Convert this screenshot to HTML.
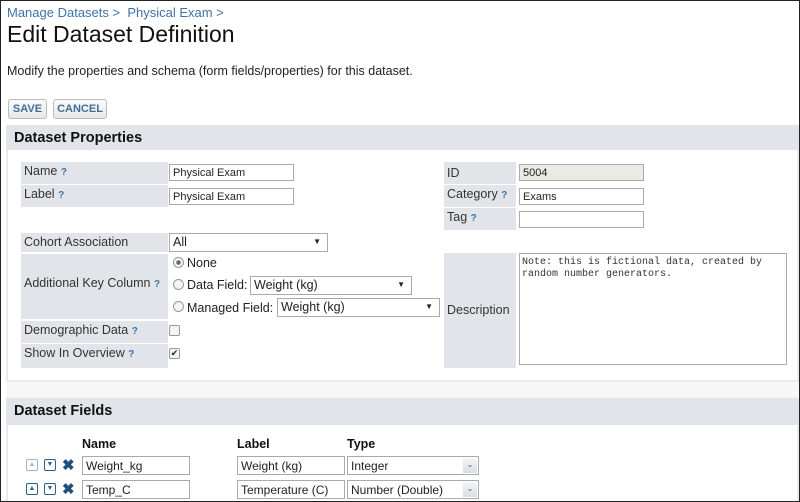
<!DOCTYPE html>
<html><head><style>
*{box-sizing:border-box;margin:0;padding:0}
html,body{width:800px;height:502px;overflow:hidden}
body{background:#fff;font-family:"Liberation Sans",sans-serif;position:relative;color:#222}
.frame{position:absolute;left:0;top:0;width:800px;height:502px;border:1px solid #222;z-index:10;pointer-events:none}
.a{position:absolute;white-space:nowrap}
.crumb{left:7px;top:5px;font-size:13px;color:#3f72a4}
h1{position:absolute;left:7px;top:21px;font-size:23px;font-weight:normal;color:#111}
.desc{left:7px;top:64px;font-size:12.5px;color:#222}
.btn{position:absolute;top:99px;height:20px;border:1px solid #bbb;border-radius:3px;background:linear-gradient(#fafafa,#e8e8e8);font-size:11px;font-weight:bold;color:#3f6f99;text-align:center;line-height:18px}
.ph{position:absolute;left:6px;right:1px;background:#e1e5e9;font-size:14.5px;font-weight:bold;padding-left:8px;color:#111}
.pb{position:absolute;left:6px;right:1px;background:#fff;border:2px solid #e8ebee;border-top:none}
.lab{position:absolute;background:#e1e5e9;font-size:12.5px;color:#333;padding:2px 3px}
.q{color:#3f72a4;font-size:10px;font-weight:bold}
.inp{position:absolute;height:17px;border:1px solid #aaa;background:#fff;font-size:11px;padding:2px 3px;color:#222}
.sel{position:absolute;height:19px;border:1px solid #aaa;background:#fff;font-size:12.5px;padding:1px 3px;color:#222}
.sel:after{content:"\25BC";position:absolute;right:6px;top:3px;font-size:8px}
.rad{position:absolute;width:11px;height:11px;border:1px solid #999;border-radius:50%;background:#f4f4f4}
.t{position:absolute;font-size:12.5px;color:#222}
.hd{position:absolute;top:437px;font-size:12.5px;font-weight:bold;color:#111}
.ic{position:absolute;width:12px;height:12px;border:1.5px solid #2e5f8a;border-radius:2px;font-size:7px;line-height:9px;text-align:center;color:#2e5f8a}
.x{position:absolute;font-size:15px;font-weight:bold;color:#1f4f7d;line-height:14px}
.dd{position:absolute;right:1px;top:1px;width:14px;bottom:1px;background:linear-gradient(#f4f6f8,#d8dde3);font-size:8px;text-align:center;color:#557;line-height:14px}
</style></head><body>
<div class="frame"></div>
<div class="a crumb">Manage Datasets &gt;&nbsp; Physical Exam &gt;</div>
<h1>Edit Dataset Definition</h1>
<div class="a desc">Modify the properties and schema (form fields/properties) for this dataset.</div>
<div class="btn" style="left:8px;width:39px">SAVE</div>
<div class="btn" style="left:53px;width:54px">CANCEL</div>

<div class="ph" style="top:125px;height:25px;line-height:27px">Dataset Properties</div>
<div class="pb" style="top:150px;height:232px"></div>
<div style="position:absolute;left:6px;right:1px;top:382px;height:16px;background:#f7f7f7"></div>

<div class="lab" style="left:21px;top:162px;width:147px;height:22px">Name <span class="q">?</span></div>
<div class="lab" style="left:21px;top:185px;width:147px;height:22px">Label <span class="q">?</span></div>
<div class="lab" style="left:21px;top:233px;width:147px;height:19px">Cohort Association</div>
<div class="lab" style="left:21px;top:254px;width:147px;height:65px;padding-top:22px">Additional Key Column <span class="q">?</span></div>
<div class="lab" style="left:21px;top:321px;width:147px;height:22px">Demographic Data <span class="q">?</span></div>
<div class="lab" style="left:21px;top:344px;width:147px;height:24px">Show In Overview <span class="q">?</span></div>
<div class="inp" style="left:169px;top:164px;width:125px">Physical Exam</div>
<div class="inp" style="left:169px;top:188px;width:125px">Physical Exam</div>
<div class="sel" style="left:169px;top:233px;width:159px">All</div>
<div class="rad" style="left:173px;top:257px;background:radial-gradient(#666 30%,#f4f4f4 40%)"></div>
<div class="t" style="left:187px;top:256px">None</div>
<div class="rad" style="left:173px;top:279px"></div>
<div class="t" style="left:187px;top:278px">Data Field:</div>
<div class="sel" style="left:250px;top:276px;width:162px">Weight (kg)</div>
<div class="rad" style="left:173px;top:301px"></div>
<div class="t" style="left:187px;top:301px">Managed Field:</div>
<div class="sel" style="left:277px;top:298px;width:163px">Weight (kg)</div>
<div style="position:absolute;left:169px;top:325px;width:11px;height:11px;border:1px solid #999;border-radius:2px;background:#f4f4f4"></div>
<div style="position:absolute;left:169px;top:348px;width:11px;height:11px;border:1px solid #999;border-radius:2px;background:#f4f4f4;font-size:9px;line-height:9px;text-align:center">✔</div>

<div class="lab" style="left:444px;top:162px;width:72px;height:22px;padding-top:4px">ID</div>
<div class="lab" style="left:444px;top:185px;width:72px;height:22px">Category <span class="q">?</span></div>
<div class="lab" style="left:444px;top:208px;width:72px;height:22px">Tag <span class="q">?</span></div>
<div class="lab" style="left:444px;top:253px;width:72px;height:115px;padding-top:50px">Description</div>
<div class="inp" style="left:519px;top:164px;width:125px;background:#ebebe4">5004</div>
<div class="inp" style="left:519px;top:188px;width:125px">Exams</div>
<div class="inp" style="left:519px;top:211px;width:125px"></div>
<div style="position:absolute;left:519px;top:253px;width:268px;height:112px;border:1px solid #aaa;font-family:'Liberation Mono',monospace;font-size:10px;padding:3px 2px;line-height:12px;color:#333">Note: this is fictional data, created by<br>random number generators.</div>

<div class="ph" style="top:398px;height:27px;line-height:27px">Dataset Fields</div>
<div class="pb" style="top:425px;height:80px"></div>
<div class="hd" style="left:82px">Name</div>
<div class="hd" style="left:237px">Label</div>
<div class="hd" style="left:347px">Type</div>

<div class="ic" style="left:26px;top:459px;opacity:.45">▲</div>
<div class="ic" style="left:44px;top:459px">▼</div>
<div class="x" style="left:62px;top:459px">✖</div>
<div class="inp" style="left:82px;top:456px;width:108px;height:19px;font-size:12px">Weight_kg</div>
<div class="inp" style="left:237px;top:456px;width:108px;height:19px;font-size:12px">Weight (kg)</div>
<div class="inp" style="left:347px;top:456px;width:132px;height:19px;font-size:12px">Integer<div class="dd">⌄</div></div>

<div class="ic" style="left:26px;top:483px">▲</div>
<div class="ic" style="left:44px;top:483px">▼</div>
<div class="x" style="left:62px;top:483px">✖</div>
<div class="inp" style="left:82px;top:480px;width:108px;height:19px;font-size:12px">Temp_C</div>
<div class="inp" style="left:237px;top:480px;width:108px;height:19px;font-size:12px">Temperature (C)</div>
<div class="inp" style="left:347px;top:480px;width:132px;height:19px;font-size:12px">Number (Double)<div class="dd">⌄</div></div>
</body></html>
